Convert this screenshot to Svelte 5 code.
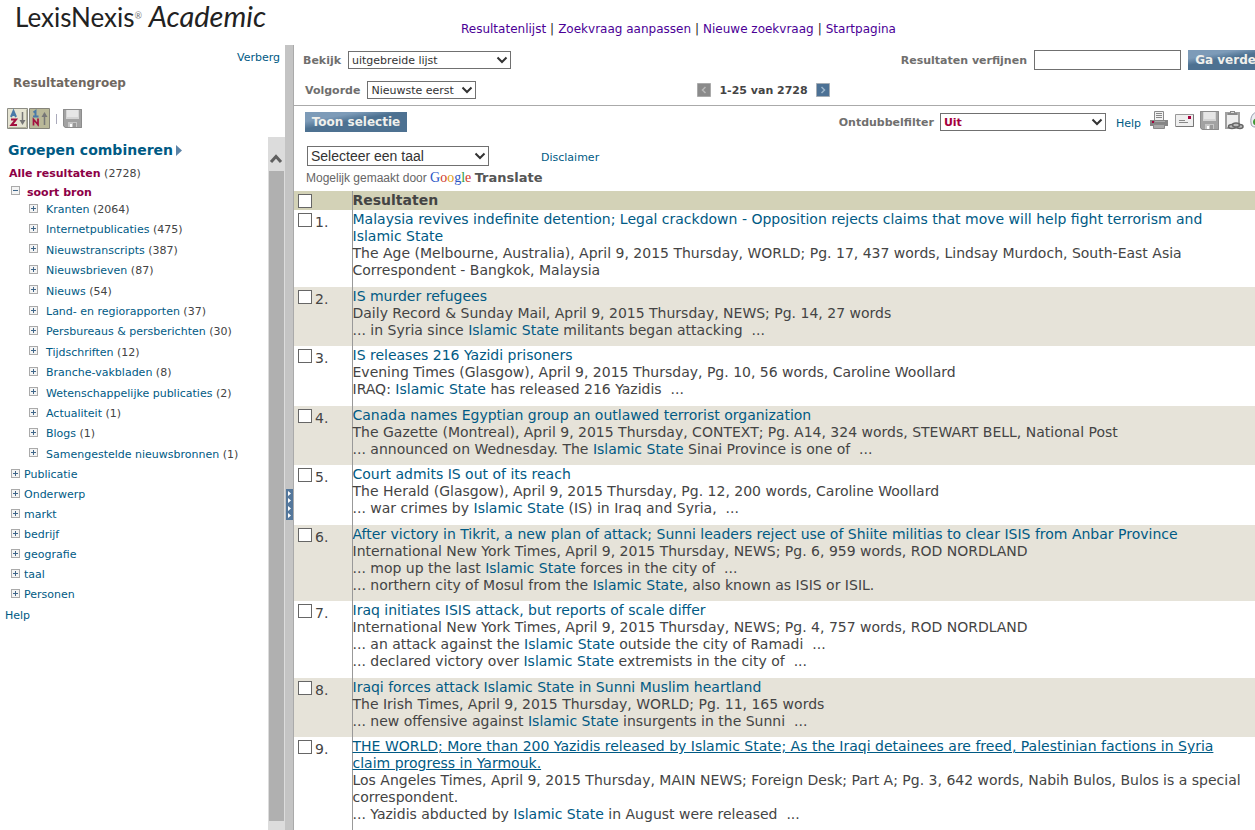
<script>
  const groups = [
    ['Kranten', 2064], ['Internetpublicaties', 475], ['Nieuwstranscripts', 387], ['Nieuwsbrieven', 87],
    ['Nieuws', 54], ['Land- en regiorapporten', 37], ['Persbureaus & persberichten', 30],
    ['Tijdschriften', 12], ['Branche-vakbladen', 8], ['Wetenschappelijke publicaties', 2],
    ['Actualiteit', 1], ['Blogs', 1], ['Samengestelde nieuwsbronnen', 1]
  ];
  const categories = ['Publicatie', 'Onderwerp', 'markt', 'bedrijf', 'geografie', 'taal', 'Personen'];
  const links = ['Resultatenlijst', 'Zoekvraag aanpassen', 'Nieuwe zoekvraag', 'Startpagina'];
  const results = [
    { title: 'Malaysia revives indefinite detention; Legal crackdown - Opposition rejects claims that move will help fight terrorism and Islamic State',
      source: 'The Age (Melbourne, Australia), April 9, 2015 Thursday, WORLD; Pg. 17, 437 words, Lindsay Murdoch, South-East Asia Correspondent - Bangkok, Malaysia', quotes: [] },
    { title: 'IS murder refugees', source: 'Daily Record & Sunday Mail, April 9, 2015 Thursday, NEWS; Pg. 14, 27 words',
      quotes: ['... in Syria since Islamic State militants began attacking \u00a0...'] },
    { title: 'IS releases 216 Yazidi prisoners', source: 'Evening Times (Glasgow), April 9, 2015 Thursday, Pg. 10, 56 words, Caroline Woollard',
      quotes: ['IRAQ: Islamic State has released 216 Yazidis \u00a0...'] },
    { title: 'Canada names Egyptian group an outlawed terrorist organization', source: 'The Gazette (Montreal), April 9, 2015 Thursday, CONTEXT; Pg. A14, 324 words, STEWART BELL, National Post',
      quotes: ['... announced on Wednesday. The Islamic State Sinai Province is one of \u00a0...'] },
    { title: 'Court admits IS out of its reach', source: 'The Herald (Glasgow), April 9, 2015 Thursday, Pg. 12, 200 words, Caroline Woollard',
      quotes: ['... war crimes by Islamic State (IS) in Iraq and Syria, \u00a0...'] },
    { title: 'After victory in Tikrit, a new plan of attack; Sunni leaders reject use of Shiite militias to clear ISIS from Anbar Province',
      source: 'International New York Times, April 9, 2015 Thursday, NEWS; Pg. 6, 959 words, ROD NORDLAND',
      quotes: ['... mop up the last Islamic State forces in the city of \u00a0...', '... northern city of Mosul from the Islamic State, also known as ISIS or ISIL.'] },
    { title: 'Iraq initiates ISIS attack, but reports of scale differ',
      source: 'International New York Times, April 9, 2015 Thursday, NEWS; Pg. 4, 757 words, ROD NORDLAND',
      quotes: ['... an attack against the Islamic State outside the city of Ramadi \u00a0...', '... declared victory over Islamic State extremists in the city of \u00a0...'] },
    { title: 'Iraqi forces attack Islamic State in Sunni Muslim heartland', source: 'The Irish Times, April 9, 2015 Thursday, WORLD; Pg. 11, 165 words',
      quotes: ['... new offensive against Islamic State insurgents in the Sunni \u00a0...'] },
    { title: 'THE WORLD; More than 200 Yazidis released by Islamic State; As the Iraqi detainees are freed, Palestinian factions in Syria claim progress in Yarmouk.', active: true,
      source: 'Los Angeles Times, April 9, 2015 Thursday, MAIN NEWS; Foreign Desk; Part A; Pg. 3, 642 words, Nabih Bulos, Bulos is a special correspondent.',
      quotes: ['... Yazidis abducted by Islamic State in August were released \u00a0...'] }
  ];
  const term = 'Islamic State';
</script>

{#snippet chevron()}
  <svg class="chevron" width="12" height="8" viewBox="0 0 12 8" aria-hidden="true"><path d="M1.5 1.5 6 6l4.5-4.500" fill="none" stroke="#333" stroke-width="2" /></svg>
{/snippet}

{#snippet box(open)}
  <svg class="box" width="9" height="9" viewBox="0 0 9 9" aria-hidden="true">
    <rect x=".5" y=".5" width="8" height="8" fill="#f4f4f4" stroke="#aaa" />
    <path d={open ? 'M2 4.5h5' : 'M2 4.5h5M4.5 2v5'} stroke="#3f6689" />
  </svg>
{/snippet}

{#snippet disk()}
  <svg width="19" height="19" viewBox="0 0 19 19" aria-hidden="true">
    <path d="M0 0h19v19H2l-2-2z" fill="#a2a2a2" /><path d="M.5.5h18v18H2.500l-2-2z" fill="none" stroke="#8c8c8c" />
    <path d="M3 1h13v9H3z" fill="#d4d4d4" /><path d="M4 1h11v7H4z" fill="#e6e6e6" />
    <path d="M5 13h9v5H5z" fill="#c6c6c6" /><path d="M7 15h2v3H7z" fill="#fff" /><path d="M10 14h3v4h-3z" fill="#999" />
  </svg>
{/snippet}

<div class="page">
  <header>
    <div class="logo">LexisNexis<sup>®</sup> <em>Academic</em></div>
    <nav>
      {#each links as link, i}{#if i}<span class="bar">|</span>{/if}<a href="#top">{link}</a>{/each}
    </nav>
  </header>

  <div class="body">
    <aside>
      <div class="side-head">
        <a class="hide" href="#hide">Verberg</a>
        <h2>Resultatengroep</h2>
        <div class="tools">
          <button class="plain" aria-label="Sorteer A-Z">
            <svg width="21" height="21" viewBox="0 0 21 21">
              <path d="M.5.5h20v20H.5z" fill="#e5e4d2" stroke="#8c8c84" /><path d="M1.500 19.500h18v-18" fill="none" stroke="#b3b29c" />
              <path d="M4 9 6.500 3 9 9M5 7h3" fill="none" stroke="#4a7aa8" stroke-width="2" />
              <path d="M4 11.500h5L4.500 17H10" fill="none" stroke="#a3103f" stroke-width="2" />
              <path d="M15.500 4v9" stroke="#777" stroke-width="1.500" /><path d="M12.500 12h6l-3 5z" fill="#777" />
            </svg>
          </button>
          <button class="plain" aria-label="Sorteer op aantal">
            <svg width="21" height="21" viewBox="0 0 21 21">
              <path d="M.5.5h20v20H.5z" fill="#b9b898" stroke="#85847a" />
              <path d="M4.500 4.500 6.500 3v5M4 8.500h5.500" fill="none" stroke="#4a7aa8" stroke-width="2" />
              <path d="M4.500 17.500v-6l4.500 5v-6M9 11v6.500" fill="none" stroke="#a3103f" stroke-width="1.700" />
              <path d="M15.500 17V8" stroke="#777" stroke-width="1.500" /><path d="M12.500 9h6l-3-5z" fill="#777" />
            </svg>
          </button>
          <span class="sep"></span>
          <button class="plain" aria-label="Opslaan">{@render disk()}</button>
        </div>
      </div>
      <div class="scroll">
        <div class="tree">
          <a class="combine" href="#combine">Groepen combineren<svg width="6" height="11" viewBox="0 0 6 11" aria-hidden="true"><path d="M0 0v11l6-5.500z" fill="#5c83a6" /></svg></a>
          <div class="all"><a href="#all">Alle resultaten</a> (2728)</div>
          <div class="open">{@render box(true)}<a href="#source">soort bron</a></div>
          <ul class="groups">
            {#each groups as [name, count]}
              <li>{@render box(false)}<span><a href="#group">{name}</a> ({count})</span></li>
            {/each}
          </ul>
          <ul class="categories">
            {#each categories as name}
              <li>{@render box(false)}<a href="#category">{name}</a></li>
            {/each}
          </ul>
          <a class="help" href="#help">Help</a>
        </div>
        <div class="track">
          <svg width="17" height="34" viewBox="0 0 17 34" aria-hidden="true"><path d="m3 25 5-5.500 5 5.500" fill="none" stroke="#606060" stroke-width="3" /></svg>
          <div class="thumb"></div>
        </div>
      </div>
    </aside>

    <div class="splitter">
      <svg width="7" height="31" viewBox="0 0 7 31" aria-hidden="true">
        <path d="M0 0h7v31H0z" fill="#54779b" /><path d="M2 2v5l3-2.500zM2 9v5l3-2.500zM2 17v5l3-2.500zM2 24v5l3-2.500z" fill="#fff" />
      </svg>
    </div>

    <main>
      <div class="wide">
        <section class="filters">
          <div class="line">
            <label for="view">Bekijk</label>
            <span class="pick view"><select id="view"><option>uitgebreide lijst</option></select>{@render chevron()}</span>
            <label class="push" for="refine">Resultaten verfijnen</label>
            <input id="refine" type="text" />
            <button class="action go">Ga verder</button>
          </div>
          <div class="line second">
            <label for="order">Volgorde</label>
            <span class="pick order"><select id="order"><option>Nieuwste eerst</option></select>{@render chevron()}</span>
            <div class="pager">
              <button class="plain" aria-label="Vorige"><svg width="14" height="14" viewBox="0 0 14 14"><path d="M.5.5h13v13H.5z" fill="#8a8a8a" stroke="#aaa" /><path d="M8.500 4 5.500 7l3 3" fill="none" stroke="#b8b8b8" stroke-width="1.500" /></svg></button>
              <b>1-25 van 2728</b>
              <button class="plain" aria-label="Volgende"><svg width="14" height="14" viewBox="0 0 14 14"><path d="M.5.5h13v13H.5z" fill="#4c7195" stroke="#a5adb5" /><path d="m5.500 4 3 3-3 3" fill="none" stroke="#9db6cc" stroke-width="1.500" /></svg></button>
            </div>
          </div>
        </section>

        <section class="actions">
          <div class="line">
            <button class="action show">Toon selectie</button>
            <label class="push" for="dup">Ontdubbelfilter</label>
            <span class="pick dup"><select id="dup"><option>Uit</option></select>{@render chevron()}</span>
            <a class="small" href="#help">Help</a>
            <div class="icons">
              <button class="plain" aria-label="Afdrukken"><svg width="19" height="19" viewBox="0 0 19 19">
                <path d="M4.500.5h9v9h-9z" fill="#f2f2f2" stroke="#8a8a8a" /><path d="M6 2.500h6M6 4.500h6M6 6.500h6" stroke="#888" />
                <path d="M0 9h18v6H0z" fill="#858585" /><path d="M2 10h2v2H2z" fill="#a5003c" /><path d="M5 10h10v1H5z" fill="#aaa" /><path d="M3.500 13.500h11v4h-11z" fill="#a9a9a9" stroke="#888" />
              </svg></button>
              <button class="plain" aria-label="E-mail"><svg width="19" height="19" viewBox="0 0 19 19">
                <path d="M.5 3.500h18v12H.5z" fill="#efefef" stroke="#999" /><path d="M1 15.500h17.500v-12" fill="none" stroke="#777" /><path d="M13 5h3v3h-3z" fill="#a5003c" /><path d="M4 9.500h6M4 11.500h9" stroke="#888" />
              </svg></button>
              <button class="plain" aria-label="Downloaden">{@render disk()}</button>
              <button class="plain" aria-label="Link kopiëren"><svg width="19" height="19" viewBox="0 0 19 19">
                <path d="M0 1h15v17H0z" fill="#a0a0a0" /><path d="M2 4h11v12H2z" fill="#eee" /><path d="M5 0h5v2h2v2H3V2h2z" fill="#888" /><path d="M6 1.500h3" stroke="#ddd" />
                <g fill="#bbb" stroke="#666" stroke-width="1.500"><ellipse cx="7" cy="15.500" rx="3.500" ry="2" /><ellipse cx="15" cy="15.500" rx="3" ry="2" /><ellipse cx="11" cy="14" rx="3.500" ry="2" /></g>
              </svg></button>
              <button class="plain" aria-label="Exporteren"><svg width="19" height="19" viewBox="0 0 19 19"><path d="M1 12C0 6 3 1 8 1h10v15H5c-2 0-4-1-4-4z" fill="#eceef3" stroke="#969bab" /><path d="M3 11c0-3 3-4 5-4v7H5c-1 0-2-1-2-3z" fill="#3f9b37" /></svg></button>
            </div>
          </div>
          <div class="translate">
            <span class="pick lang"><select aria-label="Selecteer een taal"><option>Selecteer een taal</option></select>{@render chevron()}</span>
            <a class="small" href="#disclaimer">Disclaimer</a>
          </div>
          <div class="powered">Mogelijk gemaakt door <span class="google"><i class="b">G</i><i class="r">o</i><i class="y">o</i><i class="b">g</i><i class="g">l</i><i class="r">e</i></span> <b>Translate</b></div>
        </section>

        <table>
          <thead>
            <tr><th class="sel"><input type="checkbox" aria-label="Alles selecteren" /></th><th>Resultaten</th></tr>
          </thead>
          <tbody>
            {#each results as item, i}
              <tr>
                <td class="sel"><label><input type="checkbox" /><span>{i + 1}.</span></label></td>
                <td>
                  <div class="title"><a class:active={item.active} href="#result">{item.title}</a></div>
                  <div>{item.source}</div>
                  {#each item.quotes as quote}
                    <div>{quote.split(term)[0]}<a href="#term">{term}</a>{quote.split(term)[1]}</div>
                  {/each}
                </td>
              </tr>
            {/each}
          </tbody>
        </table>
      </div>
    </main>
  </div>
</div>

<style>
  :global(body) { margin: 0; background: #fff; }
  * { box-sizing: border-box; }
  .page { height: 100vh; overflow: hidden; display: flex; flex-direction: column; font: 11px/20px "DejaVu Sans", Verdana, sans-serif; color: #444; }
  a { color: #005a84; text-decoration: none; }
  ul { list-style: none; margin: 0; padding: 0; }
  .plain { display: block; padding: 0; border: 0; background: none; line-height: 0; }
  header { flex: none; height: 45px; display: grid; grid-template-columns: 461px 1fr; }
  .logo { padding-left: 15px; font: 26px/32px Lato, sans-serif; color: #222; white-space: nowrap; }
  .logo sup { font-size: 9px; line-height: 10px; vertical-align: 8px; color: #777; }
  .logo em { font-size: 29px; }
  nav { padding-top: 19px; font-size: 12px; white-space: nowrap; }
  nav a { color: #4b0096; }
  .bar { margin: 0 4px; color: #222; }
  .body { flex: 1; min-height: 0; display: flex; }
  aside { flex: none; width: 285px; display: flex; flex-direction: column; }
  .side-head { height: 92px; flex: none; }
  .hide { display: block; text-align: right; padding: 3px 5px 0 0; }
  h2 { margin: 5px 0 0 13px; font-size: 12px; line-height: 20px; color: #706860; }
  .tools { display: flex; gap: 1px; align-items: center; margin: 15px 0 0 7px; }
  .sep { width: 1px; height: 10px; background: #aab; margin: 0 5px; }
  .scroll { flex: 1; min-height: 0; display: flex; }
  .tree { flex: 1; min-width: 0; padding-top: 3px; white-space: nowrap; overflow: hidden; }
  .combine { display: flex; align-items: center; gap: 3px; margin-left: 8px; font-size: 14px; font-weight: bold; height: 20px; }
  .all { margin: 4px 0 0 9px; height: 20px; }
  .all a, .open a { color: #8c0046; font-weight: bold; }
  .open { display: flex; gap: 7px; margin-left: 11px; height: 16px; line-height: 18px; }
  .open .box { margin-top: 2px; }
  li { display: flex; align-items: center; height: 20px; }
  li .box { margin-bottom: 4px; }
  .groups li { gap: 8px; padding-left: 29px; }
  .groups li:nth-child(5n + 3), .groups li:nth-child(5n) { height: 21px; }
  .categories li { gap: 4px; padding-left: 11px; }
  .help { display: block; margin: 1px 0 0 5px; }
  .track { flex: none; width: 17px; background: #dcdcdc; display: flex; flex-direction: column; padding-bottom: 9px; }
  .thumb { flex: 1; margin: 0 1px; background: #b0b0b0; }
  .splitter { flex: none; width: 9px; background: #c4c4c4; border-right: 1px solid #aaa; display: flex; align-items: center; padding: 134px 0 0 1px; }
  main { flex: 1; min-width: 0; overflow: hidden; }
  .wide { width: calc(100% + 14px); }
  .line { display: flex; align-items: center; height: 30px; white-space: nowrap; }
  label, .pager { font-weight: bold; color: #706f6e; }
  .line label, .line b { padding-top: 2px; }
  .push { margin-left: auto; }
  .filters { height: 61px; border-bottom: 1px solid #aaa; padding-left: 9px; }
  .filters .line { gap: 7px; }
  .filters .second { padding-left: 2px; }
  .pick { display: inline-grid; align-items: center; }
  .pick select, .pick :global(.chevron) { grid-area: 1 / 1; }
  .pick :global(.chevron) { justify-self: end; margin-right: 3px; pointer-events: none; }
  select { appearance: none; width: 100%; height: 18px; border: 1px solid #707070; border-radius: 0; background: #fff; padding: 0 3px; font: 11px "DejaVu Sans", Verdana, sans-serif; color: #333; }
  .view { width: 163px; }
  .order { width: 109px; }
  .dup { width: 166px; margin: 0 10px 0 6px; }
  .dup select { font-weight: bold; color: #a5003c; }
  #refine { width: 147px; height: 20px; border: 1px solid #707070; padding: 0 3px; font: inherit; }
  .action { height: 20px; padding: 0 5px; border: 0; background: linear-gradient(170deg, #7d9bb8 0 25%, #4d7191 45%); color: #f0f0ec; font: bold 12px/18px "DejaVu Sans", Verdana, sans-serif; }
  .go { width: 81px; }
  .show { width: 102px; }
  .pager { display: flex; align-items: center; gap: 8px; margin-left: 214px; color: #444; }
  .actions { padding-left: 11px; height: 85px; }
  .actions .line { height: 32px; }
  .icons { display: flex; align-items: center; gap: 6px; margin: 0 0 4px 9px; }
  .small { line-height: 20px; margin-top: 4px; }
  .translate { display: flex; align-items: center; height: 24px; margin-top: 6px; padding-left: 2px; gap: 52px; }
  .lang { width: 182px; }
  .lang select { height: 20px; font: 14px "Liberation Sans", Arial, sans-serif; }
  .powered { margin-left: 1px; height: 22px; font: 12px/20px "Liberation Sans", Arial, sans-serif; color: #666; white-space: nowrap; }
  .powered b { font: bold 13px "DejaVu Sans", Verdana, sans-serif; color: #555; }
  .google { font: 14px "Liberation Serif", serif; }
  .google i { font-style: normal; }
  .b { color: #2a56c6; } .r { color: #d03a2b; } .y { color: #e0a010; } .g { color: #2f9a45; }
  table { width: 100%; border-collapse: collapse; table-layout: fixed; font-size: 14px; line-height: 17px; }
  th, td { text-align: left; vertical-align: top; padding: 1px 0 7px; }
  tbody tr:nth-child(odd) td { padding-bottom: 8px; }
  th { background: #d3d2b7; padding: 1px 0; }
  tbody tr:nth-child(even) { background: #e6e3d9; }
  .title { padding-right: 24px; }
  .sel { width: 58px; padding-left: 4px; border-right: 1px solid #999; }
  td label { display: flex; font-weight: normal; gap: 3px; color: #444; }
  td label span { padding-top: 3px; }
  input[type='checkbox'] { appearance: none; display: block; flex: none; width: 14px; height: 14px; margin: 2px 0 0; border: 1px solid #666; background: #fff; }
  .active { text-decoration: underline; }
</style>
